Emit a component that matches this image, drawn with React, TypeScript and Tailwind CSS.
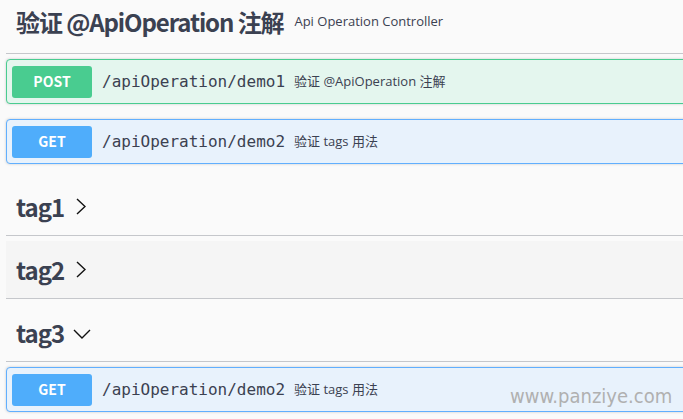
import React from "react";

const TEXT = "text-[#3b4151]";

function Chevron({ down }: { down?: boolean }) {
  if (down) {
    return (
      <svg width="18" height="10" viewBox="0 0 18 10" className="ml-[9px] mt-[2px]">
        <path d="M1 1 L9 9 L17 1" fill="none" stroke="#111" strokeWidth="1.4" />
      </svg>
    );
  }
  return (
    <svg width="10" height="17" viewBox="0 0 10 17" className="ml-[12px] mt-[-1px]">
      <path d="M1 1 L9 8.5 L1 16" fill="none" stroke="#111" strokeWidth="1.4" />
    </svg>
  );
}

function OpBlock({
  method,
  path,
  desc,
  className,
}: {
  method: "POST" | "GET";
  path: string;
  desc: string;
  className?: string;
}) {
  const isPost = method === "POST";
  return (
    <div
      className={
        "flex items-center h-[45px] px-[5px] rounded-[4px] border shadow-[0_0_3px_rgba(0,0,0,0.19)] " +
        (isPost ? "border-[#49cc90] bg-[#e4f6ee] " : "border-[#61affe] bg-[#e8f2fc] ") +
        (className ?? "")
      }
    >
      <div
        className={
          "w-[80px] h-[32px] rounded-[3px] flex items-center justify-center text-white text-[14px] font-bold " +
          (isPost ? "bg-[#49cc90]" : "bg-[#4fadfb]")
        }
        style={{ fontFamily: '"Noto Sans CJK SC", "Noto Sans", sans-serif' }}
      >
        {method}
      </div>
      <div
        className={"ml-[10px] text-[16px] " + TEXT}
        style={{ fontFamily: '"DejaVu Sans Mono", monospace' }}
      >
        {path}
      </div>
      <div
        className={"ml-[9px] text-[13px] " + TEXT}
        style={{ fontFamily: '"Open Sans", "Noto Sans CJK SC", sans-serif' }}
      >
        {desc}
      </div>
    </div>
  );
}

function TagHeader({
  name,
  down,
  hover,
}: {
  name: string;
  down?: boolean;
  hover?: boolean;
}) {
  return (
    <div
      className={
        "flex items-center h-[58px] pl-[10px] border-b border-[#c5c7cb] " +
        (hover ? "bg-[#f5f5f5]" : "")
      }
    >
      <span
        className={"text-[24px] font-bold leading-none tracking-[-1px] " + TEXT}
        style={{ fontFamily: '"Noto Sans CJK SC", "Noto Sans", sans-serif' }}
      >
        {name}
      </span>
      <Chevron down={down} />
    </div>
  );
}

export default function App() {
  return (
    <div className="relative w-[683px] h-[419px] overflow-hidden bg-[#fafafa]">
      <div className="ml-[6px] w-[760px]">
        <div className="flex items-center h-[54px] pb-[10px] pl-[10px] border-b border-[#c5c7cb]">
          <span
            className={"text-[24px] font-bold leading-none tracking-[-1.1px] " + TEXT}
            style={{ fontFamily: '"Noto Sans CJK SC", "Noto Sans", sans-serif' }}
          >
            验证 @ApiOperation 注解
          </span>
          <span
            className={"ml-[11px] text-[13px] " + TEXT}
            style={{ fontFamily: '"Open Sans", "Noto Sans CJK SC", sans-serif' }}
          >
            Api Operation Controller
          </span>
        </div>
        <OpBlock
          method="POST"
          path="/apiOperation/demo1"
          desc="验证 @ApiOperation 注解"
          className="mt-[5px]"
        />
        <OpBlock
          method="GET"
          path="/apiOperation/demo2"
          desc="验证 tags 用法"
          className="mt-[15px]"
        />
        <div className="mt-[14px]">
          <TagHeader name="tag1" />
        </div>
        <div className="mt-[5px]">
          <TagHeader name="tag2" hover />
        </div>
        <div className="mt-[5px]">
          <TagHeader name="tag3" down />
        </div>
        <OpBlock
          method="GET"
          path="/apiOperation/demo2"
          desc="验证 tags 用法"
          className="mt-[5px]"
        />
      </div>
      <div
        className="absolute left-[510px] top-[386px] text-[20px] text-[#b0b0b0] leading-none"
        style={{ fontFamily: '"DejaVu Sans", sans-serif', fontStretch: "condensed" }}
      >
        www.panziye.com
      </div>
    </div>
  );
}
